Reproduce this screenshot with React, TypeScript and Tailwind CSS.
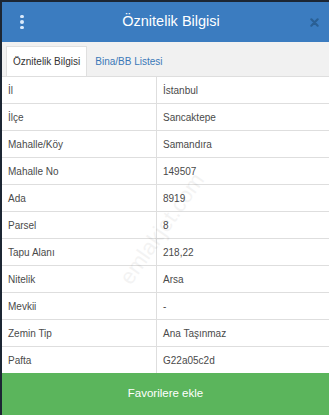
const rows: [string, string][] = [
  ["İl", "İstanbul"],
  ["İlçe", "Sancaktepe"],
  ["Mahalle/Köy", "Samandıra"],
  ["Mahalle No", "149507"],
  ["Ada", "8919"],
  ["Parsel", "8"],
  ["Tapu Alanı", "218,22"],
  ["Nitelik", "Arsa"],
  ["Mevkii", "-"],
  ["Zemin Tip", "Ana Taşınmaz"],
  ["Pafta", "G22a05c2d"],
];

export default function App() {
  return (
    <div
      className="w-[329px] h-[415px] overflow-hidden bg-[#1c2633] pt-[2px] pl-[2px]"
      style={{ fontFamily: '"Liberation Sans", Arial, sans-serif' }}
    >
      <div className="relative flex h-full flex-col bg-white">
        {/* header */}
        <div className="flex h-[40px] items-center bg-[#3b7cc0] pl-[16px] pr-[10px]">
          <div className="flex w-[8px] flex-col items-center gap-[2px]">
            <span className="h-[3.5px] w-[3.5px] rounded-full bg-[#dbeafb]" />
            <span className="h-[3.5px] w-[3.5px] rounded-full bg-[#dbeafb]" />
            <span className="h-[3.5px] w-[3.5px] rounded-full bg-[#dbeafb]" />
          </div>
          <div className="flex-1 pl-[6px] text-center text-[14.5px] text-white">Öznitelik Bilgisi</div>
          <svg width="9" height="9" viewBox="0 0 10 10">
            <path d="M1.5 1.5 L8.5 8.5 M8.5 1.5 L1.5 8.5" stroke="#2a5f94" strokeWidth="2.4" strokeLinecap="round" />
          </svg>
        </div>

        {/* tabs */}
        <div className="flex h-[34px] items-end bg-[#f1f1f1] pl-[4px]">
          <div className="flex h-[30px] items-center border border-b-0 border-[#e0e0e0] bg-white px-[6px] text-[10px] text-[#333]">
            Öznitelik Bilgisi
          </div>
          <div className="flex h-[30px] items-center px-[8px] text-[10px] text-[#3a78b8]">Bina/BB Listesi</div>
        </div>

        {/* table */}
        <div className="flex flex-col">
          {rows.map(([k, v]) => (
            <div key={k} className="flex h-[27px] border-t border-[#dedede] text-[10px] text-[#4a4a4a]">
              <div className="flex w-[155px] items-center border-r border-[#dedede] pl-[6px]">{k}</div>
              <div className="flex flex-1 items-center pl-[6px]">{v}</div>
            </div>
          ))}
        </div>

        {/* button */}
        <div className="flex flex-1 items-center justify-center bg-[#5bb55c] text-[11.5px] text-white">
          Favorilere ekle
        </div>

        {/* watermark */}
        <div className="pointer-events-none absolute left-[95px] top-[210px] -rotate-[55deg] text-[22px] text-[#000] opacity-[0.045]">
          emlakjet.com
        </div>
      </div>
    </div>
  );
}
